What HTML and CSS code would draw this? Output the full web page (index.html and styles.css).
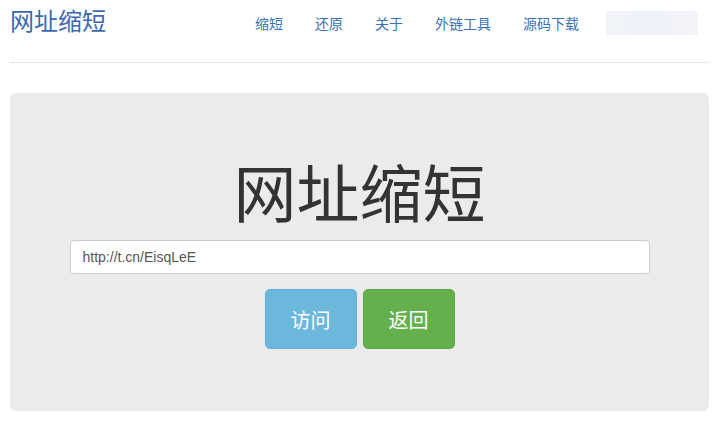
FILE: index.html
```html
<!DOCTYPE html>
<html lang="zh-CN">
<head>
    <meta charset="UTF-8">
    <title>网址缩短</title>
    <link rel="stylesheet" href="styles.css">
</head>
<body>

<div class="header">
    <a class="brand" href="#">网址缩短</a>
    <ul class="nav">
        <li><a href="#">缩短</a></li>
        <li><a href="#">还原</a></li>
        <li><a href="#">关于</a></li>
        <li><a href="#">外链工具</a></li>
        <li><a href="#">源码下载</a></li>
    </ul>
    <div class="ad"></div>
</div>

<div class="jumbotron">
    <h1>网址缩短</h1>
    <input class="url" type="text" value="http://t.cn/EisqLeE">
    <div class="buttons">
        <button class="btn btn-info" type="button">访问</button>
        <button class="btn btn-success" type="button">返回</button>
    </div>
</div>

</body>
</html>
```
FILE: styles.css
```css
/* Estilos gerais */
body {
    margin: 0;
    padding: 0 10px;
    font-family: "Liberation Sans", "Noto Sans CJK SC", sans-serif;
    font-size: 14px;
    color: #333;
    background: #fff;
}

a {
    text-decoration: none;
}

/* Cabeçalho */
.header {
    display: flex;
    align-items: center;
    height: 46px;
    padding-bottom: 16px;
    border-bottom: 1px solid #e5e5e5;
}

.brand {
    font-size: 24px;
    color: #3f67b0;
    line-height: 46px;
    margin-top: -2px;
}

.nav {
    display: flex;
    list-style: none;
    margin: 0 0 0 auto;
    padding: 0;
    gap: 32px;
}

.nav a {
    color: #3a72b5;
    font-size: 14px;
}

.ad {
    width: 92px;
    height: 24px;
    margin: 0 11px 0 27px;
    background: linear-gradient(to right, #f2f4f9, #eef1f8, #f4f5f9);
}

/* Jumbotron */
.jumbotron {
    display: flex;
    flex-direction: column;
    align-items: center;
    margin-top: 30px;
    height: 318px;
    box-sizing: border-box;
    padding-top: 62px;
    background: #ebebeb;
    border-radius: 6px;
}

.jumbotron h1 {
    margin: 0;
    font-size: 63px;
    font-weight: normal;
    line-height: 80px;
    color: #333;
}

.url {
    box-sizing: border-box;
    width: 580px;
    height: 34px;
    margin-top: 5px;
    padding: 6px 12px;
    font-family: "Liberation Sans", sans-serif;
    font-size: 14px;
    color: #555;
    background: #fff;
    border: 1px solid #ccc;
    border-radius: 4px;
}

.buttons {
    display: flex;
    gap: 6px;
    margin-top: 15px;
}

.btn {
    width: 92px;
    height: 60px;
    border: 1px solid transparent;
    border-radius: 5px;
    color: #fff;
    font-family: "Noto Sans CJK SC", sans-serif;
    font-size: 20px;
    cursor: pointer;
}

.btn-info {
    background-color: #6bb8dc;
    border-color: #62b0d6;
}

.btn-success {
    background-color: #64b04c;
    border-color: #5ca645;
}
```
